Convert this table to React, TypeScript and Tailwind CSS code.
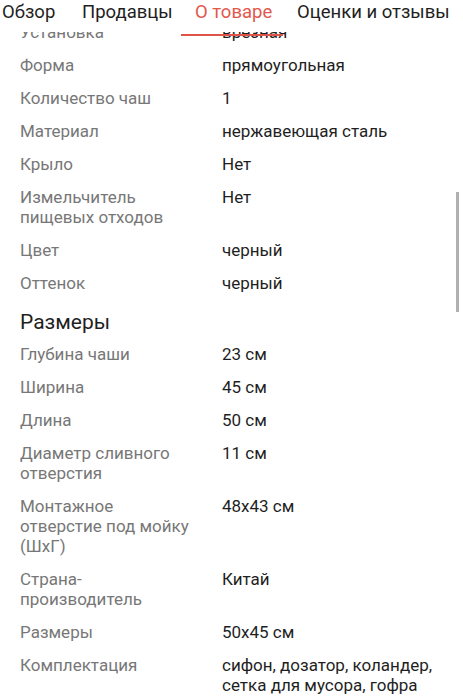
import React from 'react';

const tabs: { label: string; w: string }[] = [
  { label: 'Обзор', w: 'w-[80px]' },
  { label: 'Продавцы', w: 'w-[113px]' },
  { label: 'О товаре', w: 'w-[102px]' },
  { label: 'Оценки и отзывы', w: 'w-[160px]' },
];

const general: [string, string][] = [
  ['Установка', 'врезная'],
  ['Форма', 'прямоугольная'],
  ['Количество чаш', '1'],
  ['Материал', 'нержавеющая сталь'],
  ['Крыло', 'Нет'],
  ['Измельчитель пищевых отходов', 'Нет'],
  ['Цвет', 'черный'],
  ['Оттенок', 'черный'],
];

const sizes: [string, string][] = [
  ['Глубина чаши', '23 см'],
  ['Ширина', '45 см'],
  ['Длина', '50 см'],
  ['Диаметр сливного отверстия', '11 см'],
  ['Монтажное отверстие под мойку (ШхГ)', '48x43 см'],
  ['Страна-производитель', 'Китай'],
  ['Размеры', '50x45 см'],
  ['Комплектация', 'сифон, дозатор, коландер, сетка для мусора, гофра'],
];

const Rows = ({ items }: { items: [string, string][] }) => (
  <div className="flex flex-col gap-[13px]">
    {items.map(([k, v]) => (
      <div key={k} className="grid grid-cols-[176px_1fr] gap-x-[26px] text-[17px] leading-[20px]">
        <span className="text-[#777777]">{k}</span>
        <span className="text-[#1f1f1f]">{v}</span>
      </div>
    ))}
  </div>
);

export default function App() {
  return (
    <div
      className="relative w-[463px] h-[699px] overflow-hidden bg-white"
      style={{ fontFamily: 'Roboto, "Noto Sans", sans-serif' }}
    >
      {/* scrolled content */}
      <div className="pl-5 pr-4 pt-[22px]">
        <Rows items={general} />
        <h2 className="mt-[16px] mb-[9px] text-[21px] leading-[26px] text-[#1f1f1f]">Размеры</h2>
        <Rows items={sizes} />
      </div>

      {/* tab bar */}
      <div className="absolute left-0 top-0 w-full h-[32px] bg-white">
        <div className="flex pl-[2px]">
          {tabs.map((t) => {
            const active = t.label === 'О товаре';
            return (
              <div key={t.label} className={`relative shrink-0 h-[32px] ${t.w}`}>
                <span
                  className={`block text-[18.5px] leading-[24px] whitespace-nowrap ${
                    active ? 'text-[#e2584b]' : 'text-[#1f1f1f]'
                  }`}
                >
                  {t.label}
                </span>
                {active && <div className="absolute left-[-14px] w-[102px] bottom-[-4px] h-[2px] bg-[#df5448]" />}
              </div>
            );
          })}
        </div>
      </div>

      {/* scrollbar */}
      <div className="absolute right-[4px] top-[192px] w-[3px] h-[120px] bg-[#b0b0b0]" />
    </div>
  );
}
